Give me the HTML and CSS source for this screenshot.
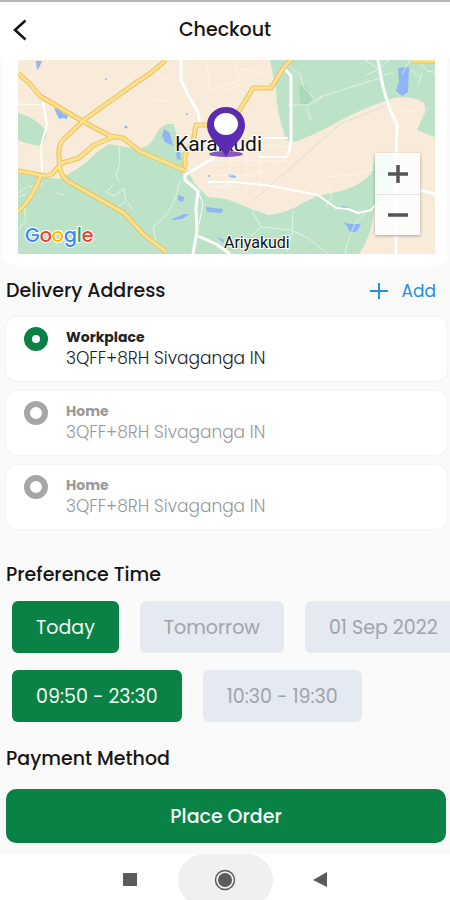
FILE: index.html
```html
<!DOCTYPE html>
<html lang="en">

<head>
  <meta charset="UTF-8">
  <meta name="viewport" content="width=device-width, initial-scale=1.0">
  <title>Checkout</title>
  <link rel="stylesheet" href="styles.css">
</head>

<body>
  <header class="header">
    <button class="back" type="button" aria-label="Back">
      <svg width="14" height="22" viewBox="0 0 14 22"><path d="M12.500 1.500 2 11l10.500 9.500" fill="none" stroke="#111" stroke-width="2.500"/></svg>
    </button>
    <h1>Checkout</h1>
  </header>

  <main>
    <section class="map-card">
      <div class="map">
        <svg class="map-art" viewBox="0 0 417 194" role="img" aria-label="Map of Karaikudi">
          <rect width="417" height="194" fill="#f9ebd9"/>

          <!-- Forest and fields -->
          <g fill="#bce3c7">
            <path d="M0 53 Q13 55 27 69 L28 75 Q27 83 22 86 Q9 84 0 80Z"/>
            <path d="M0 114 L22 117 L40 119 Q62 110 78 93 L91 84 L119 89 Q133 88 139 72 Q146 62 156 64 L160 82 L169 109 L177 124 L190 137 L208 139 Q220 143 233 149 L250 155 Q269 153 283 144 L299 136 L323 131 Q340 127 353 114 L358 95 L375 95 L375 130 L356 150 Q354 175 341 194 L0 194Z"/>
            <path d="M252 0 L400 0 L417 4 L417 77 L399 70 L408 50 L406 43 Q393 35 375 38 Q340 50 314 65 Q294 76 276 82 L268 80 Q258 50 258 30Z"/>
            <path d="M393 0H417V77L399 70L408 48L404 25Z"/>
          </g>
          <path d="M281 27 Q288 22 291 32 L294 40 Q289 48 282 43Z" fill="#a9d9b8"/>

          <!-- Water -->
          <g fill="#8fb5f5">
            <path d="M18 1h6l-3 7-2 2z"/>
            <path d="M36 48l6 2 4 4 4 1-1 4-4-1-4 1z"/>
            <path d="M146 69l6 4 3 13-8-4-3-6z"/>
            <path d="M158 93l4-2 1 9-4-1z"/>
            <path d="M160 135l6 2-1 5-5-2z"/>
            <path d="M154 159l12-5 5 0-7 5-9 1z"/>
            <path d="M188 147l17 2-1 4-15-1z"/>
            <path d="M199 177l7 3-1 3z"/>
            <path d="M380 8l11-1-1 25-6 4-6-5 3-9z"/>
            <path d="M326 162l6 2h11l-4 7-6 2z"/>
            <path d="M210 114l7 1 1 3-7-1z"/>
            <path d="M323 146l7 1-1 3-6-1z"/>
            <circle cx="88" cy="19" r="1"/><circle cx="108" cy="67" r="1.500"/>
            <circle cx="169" cy="54" r="1"/><circle cx="191" cy="116" r="1"/>
          </g>

          <!-- Minor roads -->
          <g fill="none" stroke="#fffdf8" stroke-width="1" opacity=".6">
            <path d="M101 87l1 15-4 12 3 8m-5 2l-8 8 9 4 9-8 2 14-7 4m9-3 5 7"/>
            <path d="M162 121q-5 23-14 34l-13 12 3 14"/>
            <path d="M0 133l10-7 8 2 7-5m13 10 8 2m-40 10 2 15-8 10m8-36-8 3"/>
            <path d="M270 45h20l12-8 60-19m-65 20-11-10-4-14-14-10m21 44 4 12m4-17 7-6"/>
            <path d="M347 0l14 9-13 6m13-6 10-9m-5 15 9-2m17-13-8 14m9-4 10 8m-3-18 9 11 12 2m-17 0-4 12"/>
            <path d="M234 151l9 16-10 9m10-9 31 3 1-19m0 19-6 22m6-21 15 7 20 16"/>
            <path d="M330 181l7-18 13-12M330 181l-3 13M307 120l7 16-6 11"/>
            <path d="M188 0l4 31 30-11-6-20m-24 29-6 12m30-20 11 16m-20-5 14-8m-4-17 26 7"/>
            <path d="M191 86h79m-83 15h83m-75-26v22m17-11v45m16-48v49m14-50v48M193 115h35m-38 12h35m15-50-16 13m16-38h19"/>
            <path d="M124 32l12 8 14 1m-14-28 17 9m-49-9 14 12m-2-11-10 9"/>
            <path d="M203 127l22-11 22-5 22-14M286 130l24-13 31-3 16-5"/>
            <path d="M411 47l-14 22m0-17-14-2"/>
          </g>
          <path d="M235 141 L322 64 L369 45" fill="none" stroke="#dfdbd3" stroke-width="1"/>

          <!-- White main roads -->
          <g fill="none" stroke="#fff" stroke-linejoin="round">
            <path d="M163 0v20l7 15 10 17 2 14" stroke-width="3"/>
            <path d="M25 42l4 22-6 22 1 26" stroke-width="2"/>
            <path d="M0 44l25 1" stroke-width="1"/>
            <path d="M167 110v10l13 11-2 18 1 22-4 23m5-18 18 8 14 10M167 115l30-18" stroke-width="3"/>
            <path d="M180 131l5 13-4 20" stroke-width="1"/>
            <path d="M190 122l27 0 37 4 46 9 18 13 12 1 10 4 13-3 7-8 12 1" stroke-width="2"/>
            <path d="M267 9l6 7v66l-3 13" stroke-width="3"/>
            <path d="M360 0l5 27 6 20 8 18-1 33v96M398 129l19 5" stroke-width="3"/>
            <path d="M232 78h38m-30 19h30" stroke-width="2"/>
          </g>

          <!-- Highways -->
          <g fill="none" stroke-linejoin="round">
            <g stroke="#e9c266" stroke-width="5">
              <path d="M0 13l12 11 10 12 12 7 30 18 28 15 13 2 18 14 45 19"/>
              <path d="M148 0 Q133 14 119 22 L66 60 L45 80 Q40 86 41 97 L42 110 Q45 118 51 122 L106 153 L125 174 L148 192"/>
              <path d="M95 77 L76 85 L61 98 L44 103 L34 114 L28 116 L0 111M23 115 Q16 136 0 152"/>
              <path d="M167 107l0-13 8-12 3-17h30l10-9 17-28h18l13-21 8-8M394 1h23"/>
            </g>
            <g stroke="#fbe18c" stroke-width="3">
              <path d="M0 13l12 11 10 12 12 7 30 18 28 15 13 2 18 14 45 19"/>
              <path d="M148 0 Q133 14 119 22 L66 60 L45 80 Q40 86 41 97 L42 110 Q45 118 51 122 L106 153 L125 174 L148 192"/>
              <path d="M95 77 L76 85 L61 98 L44 103 L34 114 L28 116 L0 111M23 115 Q16 136 0 152"/>
              <path d="M167 107l0-13 8-12 3-17h30l10-9 17-28h18l13-21 8-8M394 1h23"/>
            </g>
          </g>

          <!-- Labels -->
          <text class="label city" x="157" y="91">Karaikudi</text>
          <text class="label town" x="206" y="188">Ariyakudi</text>
          <text class="google" x="7" y="182"><tspan fill="#4285f4">G</tspan><tspan fill="#ea4335">o</tspan><tspan fill="#fbbc05">o</tspan><tspan fill="#4285f4">g</tspan><tspan fill="#34a853">l</tspan><tspan fill="#ea4335">e</tspan></text>

          <!-- Pin -->
          <ellipse cx="208" cy="94" rx="17" ry="3" fill="#8459bf"/>
          <path d="M208 97 C203 86 189 79 189 65 A19 18 0 0 1 227 65 C227 79 213 86 208 97Z" fill="#5c2cb0"/>
          <ellipse cx="208" cy="64" rx="12" ry="11" fill="#fff"/>
        </svg>
        <div class="zoom">
          <button type="button" aria-label="Zoom in"><svg width="20" height="20" viewBox="0 0 20 20"><path d="M0 10h20M10 1v18" stroke="#555" stroke-width="3.500"/></svg></button>
          <button type="button" aria-label="Zoom out"><svg width="20" height="20" viewBox="0 0 20 20"><path d="M0 10h20" stroke="#555" stroke-width="3.500"/></svg></button>
        </div>
      </div>
    </section>

    <div class="section-head">
      <h2>Delivery Address</h2>
      <a class="add" href="#">
        <svg width="18" height="16" viewBox="0 0 18 16"><path d="M0 8h18M9 0v16" stroke="#238fdd" stroke-width="2"/></svg>
        Add
      </a>
    </div>

    <div class="addresses">
      <label class="address">
        <input type="radio" name="address" checked>
        <span class="address-text"><strong>Workplace</strong><span>3QFF+8RH Sivaganga IN</span></span>
      </label>
      <label class="address">
        <input type="radio" name="address">
        <span class="address-text"><strong>Home</strong><span>3QFF+8RH Sivaganga IN</span></span>
      </label>
      <label class="address">
        <input type="radio" name="address">
        <span class="address-text"><strong>Home</strong><span>3QFF+8RH Sivaganga IN</span></span>
      </label>
    </div>

    <h2 class="time-title">Preference Time</h2>
    <div class="chips">
      <button class="chip active" type="button">Today</button>
      <button class="chip" type="button">Tomorrow</button>
      <button class="chip" type="button">01 Sep 2022</button>
    </div>
    <div class="chips">
      <button class="chip active" type="button">09:50 - 23:30</button>
      <button class="chip" type="button">10:30 - 19:30</button>
    </div>

    <h2 class="payment-title">Payment Method</h2>
    <button class="place-order" type="button">Place Order</button>
  </main>

  <!-- Android navigation bar -->
  <nav class="navbar">
    <button type="button" aria-label="Recent apps"><svg width="14" height="14" viewBox="0 0 14 14"><path d="M0 0h14v13H0z" fill="#5b5b5b"/></svg></button>
    <button class="pressed" type="button" aria-label="Home"><svg width="22" height="22" viewBox="0 0 22 22"><circle cx="11" cy="11" r="9.500" fill="none" stroke="#5b5b5b" stroke-width="1.500"/><circle cx="11" cy="11" r="7" fill="#5b5b5b"/></svg></button>
    <button type="button" aria-label="Back"><svg width="14" height="16" viewBox="0 0 14 16"><path d="M14 0v15L0 8z" fill="#5b5b5b"/></svg></button>
  </nav>
</body>

</html>
```

FILE: styles.css
```css
/* General Body Styles */
* {
  box-sizing: border-box;
}

body {
  font-family: Poppins, Inter, sans-serif;
  background: #fafafa;
  color: #161616;
  margin: 0;
  min-height: 100vh;
  display: flex;
  flex-direction: column;
}

button {
  font-family: inherit;
  border: none;
  padding: 0;
  cursor: pointer;
}

svg {
  display: block;
}

h1, h2 {
  margin: 0;
  font-size: 19px;
  line-height: 26px;
  font-weight: 500;
}

/* Header */
.header {
  display: grid;
  grid-template-columns: 40px 1fr 40px;
  align-items: center;
  height: 58px;
  border-top: 2px solid #b5b5b5;
  background: #fff;
}

.header h1 {
  text-align: center;
}

.back {
  background: none;
  display: flex;
  justify-content: center;
}

main {
  flex: 1;
}

/* Map */
.map-card {
  background: #fff;
  margin: 0 3px;
  padding: 2px 12px 11px 15px;
  border-radius: 0 0 10px 10px;
}

.map {
  position: relative;
}

.map-art {
  width: 100%;
  height: auto;
}

.label {
  font-family: Roboto, sans-serif;
  fill: #111;
  stroke: #fff;
  stroke-width: 2px;
  paint-order: stroke;
}

.city {
  font-size: 21px;
}

.town {
  font-size: 16px;
}

.google {
  font-size: 19px;
  font-weight: 500;
  stroke: #fff;
  stroke-width: 2px;
  paint-order: stroke;
}

.zoom {
  position: absolute;
  right: 15px;
  bottom: 19px;
  width: 45px;
  background: rgba(255, 255, 255, 0.85);
  box-shadow: 0 1px 3px rgba(0, 0, 0, 0.3);
}

.zoom button {
  width: 100%;
  height: 41px;
  background: none;
  display: flex;
  justify-content: center;
  align-items: center;
}

.zoom button + button {
  border-top: 1px solid #e4e4e4;
}

/* Delivery Address */
.section-head {
  display: flex;
  justify-content: space-between;
  align-items: center;
  padding: 13px 14px 13px 6px;
}

.add {
  display: flex;
  align-items: center;
  gap: 14px;
  color: #238fdd;
  font-size: 17px;
  line-height: 24px;
  text-decoration: none;
}

.addresses {
  display: flex;
  flex-direction: column;
  gap: 10px;
  padding: 0 3px 0 6px;
}

.address {
  display: flex;
  gap: 18px;
  height: 64px;
  padding: 10px 18px;
  background: #fff;
  border-radius: 10px;
  box-shadow: 0 0 2px rgba(0, 0, 0, 0.1);
  color: #999;
}

.address input {
  appearance: none;
  flex: none;
  width: 24px;
  height: 24px;
  margin: 0;
  border: 6px solid #a6a6a6;
  border-radius: 50%;
}

.address input:checked {
  border: 8px solid #0b8245;
}

.address:has(input:checked) {
  color: #222;
}

.address-text {
  display: flex;
  flex-direction: column;
  font-size: 17px;
  font-weight: 300;
  line-height: 22px;
}

.address-text strong {
  font-size: 14px;
  font-weight: 700;
  line-height: 20px;
}

/* Preference Time */
.time-title {
  margin: 33px 6px 13px;
}

.chips {
  display: flex;
  gap: 21px;
  padding: 0 12px;
  margin-bottom: 17px;
  overflow-x: auto;
  scrollbar-width: none;
}

.chip {
  flex: none;
  height: 52px;
  padding: 0 24px;
  border-radius: 6px;
  background: #e5e9f0;
  color: #a0a4aa;
  font-size: 19px;
}

.chip.active {
  background: #0b8245;
  color: #f0f8f2;
}

/* Payment */
.payment-title {
  margin: 24px 6px 17px;
}

.place-order {
  display: block;
  width: calc(100% - 10px);
  height: 54px;
  margin: 0 4px 11px 6px;
  border-radius: 10px;
  background: #0b8245;
  color: #f4faf6;
  font-size: 19px;
  font-weight: 500;
}

/* Navigation Bar */
.navbar {
  display: flex;
  justify-content: center;
  height: 46px;
  background: #fff;
  overflow: hidden;
}

.navbar button {
  width: 95px;
  height: 52px;
  background: none;
  display: flex;
  justify-content: center;
  align-items: center;
}

.navbar .pressed {
  background: #f0f0f0;
  border-radius: 26px;
}
```
